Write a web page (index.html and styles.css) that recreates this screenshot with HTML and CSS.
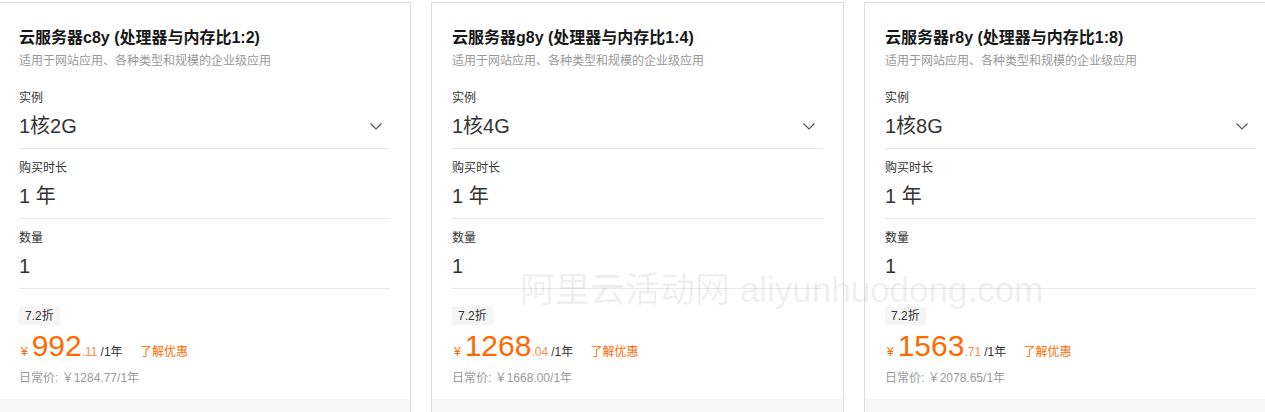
FILE: index.html
```html
<!DOCTYPE html>
<html lang="zh-CN">

    <head>
        <meta charset="UTF-8">
        <meta name="viewport" content="width=device-width, initial-scale=1.0">
        <title>云服务器</title>

        <link rel="stylesheet" href="styles.css">
    </head>

    <body>
        <main class="plans">
            <div class="card">
                <div class="card-body">
                    <h3 class="card-title">云服务器c8y (处理器与内存比1:2)</h3>
                    <p class="card-desc">适用于网站应用、各种类型和规模的企业级应用</p>

                    <div class="field">
                        <div class="field-label">实例</div>
                        <div class="field-value select">1核2G
                            <svg class="chevron" viewBox="0 0 12 7"><path d="M0.5 0.5 L6 6 L11.5 0.5" /></svg>
                        </div>
                    </div>
                    <div class="field">
                        <div class="field-label">购买时长</div>
                        <div class="field-value">1 年</div>
                    </div>
                    <div class="field">
                        <div class="field-label">数量</div>
                        <div class="field-value">1</div>
                    </div>

                    <div class="price-box">
                        <span class="discount">7.2折</span>
                        <div class="price">
                            <span class="yen">¥</span><span class="int">992</span><span class="dec">.11</span><span class="unit">/1年</span>
                            <a class="promo">了解优惠</a>
                        </div>
                        <div class="origin">日常价: ￥1284.77/1年</div>
                    </div>
                </div>
                <div class="card-foot"></div>
            </div>

            <div class="card">
                <div class="card-body">
                    <h3 class="card-title">云服务器g8y (处理器与内存比1:4)</h3>
                    <p class="card-desc">适用于网站应用、各种类型和规模的企业级应用</p>

                    <div class="field">
                        <div class="field-label">实例</div>
                        <div class="field-value select">1核4G
                            <svg class="chevron" viewBox="0 0 12 7"><path d="M0.5 0.5 L6 6 L11.5 0.5" /></svg>
                        </div>
                    </div>
                    <div class="field">
                        <div class="field-label">购买时长</div>
                        <div class="field-value">1 年</div>
                    </div>
                    <div class="field">
                        <div class="field-label">数量</div>
                        <div class="field-value">1</div>
                    </div>

                    <div class="price-box">
                        <span class="discount">7.2折</span>
                        <div class="price">
                            <span class="yen">¥</span><span class="int">1268</span><span class="dec">.04</span><span class="unit">/1年</span>
                            <a class="promo">了解优惠</a>
                        </div>
                        <div class="origin">日常价: ￥1668.00/1年</div>
                    </div>
                </div>
                <div class="card-foot"></div>
            </div>

            <div class="card">
                <div class="card-body">
                    <h3 class="card-title">云服务器r8y (处理器与内存比1:8)</h3>
                    <p class="card-desc">适用于网站应用、各种类型和规模的企业级应用</p>

                    <div class="field">
                        <div class="field-label">实例</div>
                        <div class="field-value select">1核8G
                            <svg class="chevron" viewBox="0 0 12 7"><path d="M0.5 0.5 L6 6 L11.5 0.5" /></svg>
                        </div>
                    </div>
                    <div class="field">
                        <div class="field-label">购买时长</div>
                        <div class="field-value">1 年</div>
                    </div>
                    <div class="field">
                        <div class="field-label">数量</div>
                        <div class="field-value">1</div>
                    </div>

                    <div class="price-box">
                        <span class="discount">7.2折</span>
                        <div class="price">
                            <span class="yen">¥</span><span class="int">1563</span><span class="dec">.71</span><span class="unit">/1年</span>
                            <a class="promo">了解优惠</a>
                        </div>
                        <div class="origin">日常价: ￥2078.65/1年</div>
                    </div>
                </div>
                <div class="card-foot"></div>
            </div>
        </main>

        <div class="watermark">阿里云活动网 aliyunhuodong.com</div>
    </body>

</html>
```

FILE: styles.css
```css
* {
    box-sizing: border-box;
}

html,
body {
    margin: 0;
    padding: 0;
    height: 100%;
    overflow: hidden;
    background-color: #fff;
    font-family: "Liberation Sans", "Noto Sans CJK SC", sans-serif;
    color: #333;
}

.plans {
    display: flex;
    gap: 20px;
    padding-top: 2px;
    margin-left: -2px;
}

.card {
    flex: 0 0 413px;
    width: 413px;
    border: 1px solid #dcdde3;
    border-bottom: none;
    background-color: #fff;
}

.card-body {
    padding: 23px 20px 12px;
}

.card-title {
    margin: 0 0 2px;
    font-size: 16px;
    line-height: 24px;
    font-weight: bold;
    color: #181818;
}

.card-desc {
    margin: 0 0 9px;
    font-size: 12px;
    line-height: 18px;
    color: #999;
}

.field {
    padding: 10px 0 8px;
    border-bottom: 1px solid #e8e8e8;
}

.field-label {
    font-size: 12px;
    line-height: 18px;
    color: #333;
    margin-bottom: 5px;
}

.field-value {
    font-size: 20px;
    line-height: 28px;
    color: #333;
}

.field-value.select {
    display: flex;
    justify-content: space-between;
    align-items: center;
    padding-right: 8px;
}

.chevron {
    width: 12px;
    height: 7px;
    fill: none;
    stroke: #555;
    stroke-width: 1.2;
}

.price-box {
    padding-top: 17px;
}

.discount {
    display: inline-block;
    padding: 0 6px;
    height: 18px;
    font-size: 12px;
    line-height: 18px;
    color: #333;
    background-color: #f5f5f5;
}

.price {
    margin-top: 3px;
    height: 36px;
    line-height: 36px;
    color: #ff6a00;
    white-space: nowrap;
}

.price .yen {
    font-size: 12px;
    margin: 0 4px 0 2px;
}

.price .int {
    font-size: 30px;
}

.price .dec {
    font-size: 12px;
    color: #ff8a55;
}

.price .unit {
    font-size: 12px;
    color: #333;
    margin-left: 3px;
}

.promo {
    font-size: 12px;
    color: #ff6a00;
    margin-left: 13px;
    cursor: pointer;
}

.origin {
    margin-top: 5px;
    font-size: 12px;
    line-height: 18px;
    color: #999;
}

.card-foot {
    height: 40px;
    background-color: #f7f7f7;
}

.watermark {
    position: absolute;
    left: 520px;
    top: 268px;
    font-size: 35px;
    line-height: 44px;
    color: rgba(0, 0, 0, 0.08);
    white-space: nowrap;
    pointer-events: none;
}
```
